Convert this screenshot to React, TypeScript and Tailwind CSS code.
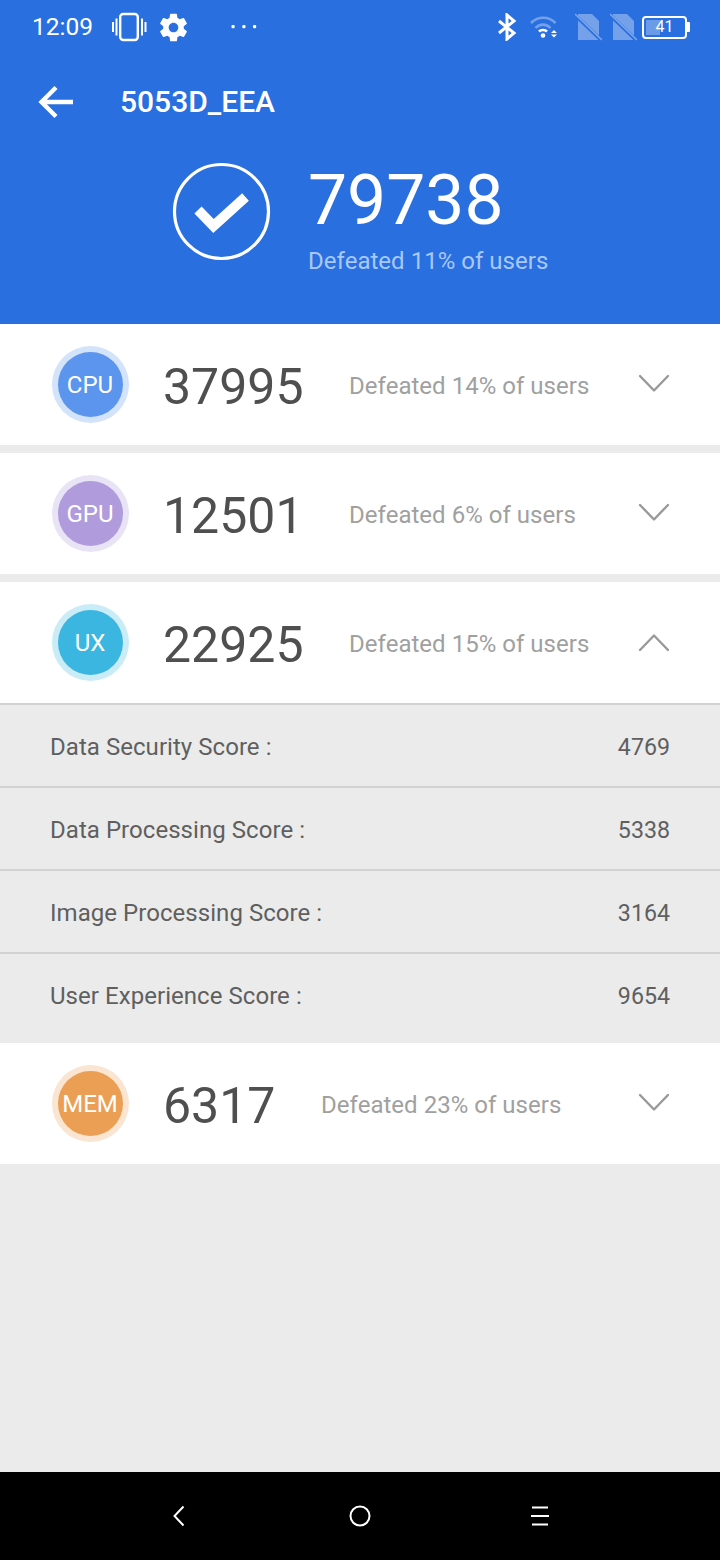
import React from "react";

function Chevron({ up }: { up?: boolean }) {
  return (
    <svg width="32" height="20" viewBox="0 0 32 20" fill="none" className="shrink-0">
      <path d={up ? "M2 18 L16 3.5 L30 18" : "M2 2 L16 16.5 L30 2"} stroke="#999999" strokeWidth="2.4" strokeLinecap="round" strokeLinejoin="round" />
    </svg>
  );
}

type RowProps = {
  label: string;
  score: string;
  text: string;
  inner: string;
  outer: string;
  up?: boolean;
  scoreWidth: string;
};

function ScoreRow({ label, score, text, inner, outer, up, scoreWidth }: RowProps) {
  return (
    <div className="h-[121px] bg-white flex items-center pl-[51.5px] pr-[50px]">
      <div className={`w-[77px] h-[77px] rounded-full flex items-center justify-center shrink-0 ${outer}`}>
        <div className={`w-[65px] h-[65px] rounded-full flex items-center justify-center text-white text-[24px] pt-[1px] ${inner}`}>{label}</div>
      </div>
      <div className={`ml-[34.5px] mt-[4px] text-[50px] leading-none text-[#4f4f4f] ${scoreWidth}`}>{score}</div>
      <div className="mt-[2px] text-[24px] leading-none text-[#a0a0a0] tracking-[0.03px]">{text}</div>
      <div className="ml-auto -mt-[1px]"><Chevron up={up} /></div>
    </div>
  );
}

function DetailRow({ label, value, last }: { label: string; value: string; last?: boolean }) {
  return (
    <div className={`flex items-center justify-between px-[50px] text-[24px] leading-none text-[#5f5f5f] bg-[#ebebeb] ${last ? "h-[89px] pb-[5px]" : "h-[83px] pt-[2px] border-b-2 border-[#d2d2d2]"}`}>
      <span className="tracking-[0.05px]">{label}</span>
      <span className="text-[23.2px] pt-[2px]">{value}</span>
    </div>
  );
}

function SimIcon({ className }: { className?: string }) {
  return (
    <svg width="27" height="28" viewBox="0 0 27 28" fill="none" className={className}>
      <path d="M3 1 H17 L24 8 V27 H3 Z" fill="white" fillOpacity="0.35" />
      <path d="M0 2 L27 28" stroke="#2a6fdf" strokeWidth="3.5" />
      <path d="M0 1 L27 27" stroke="white" strokeOpacity="0.4" strokeWidth="1.6" />
    </svg>
  );
}

export default function App() {
  return (
    <div className="w-[720px] h-[1560px] flex flex-col bg-[#ebebeb] overflow-hidden" style={{ fontFamily: "Roboto, sans-serif" }}>
      <header className="h-[324px] bg-[#2a6fdf] text-white shrink-0">
        {/* Status bar */}
        <div className="h-[54px] flex items-center pl-[32px] pr-[30px]">
          <span className="text-[24.5px] leading-none">12:09</span>
          <svg width="35" height="30" viewBox="0 0 35 30" fill="none" stroke="white" className="ml-[19px]">
            <rect x="8.2" y="2" width="17.6" height="26" rx="3" strokeWidth="2.4" />
            <path d="M4.5 6.5v17M1 10v10M30 6.5v17M33.5 10v10" strokeWidth="2" />
          </svg>
          <svg width="33" height="33" viewBox="0 0 24 24" fill="white" className="ml-[10px]">
            <path fillRule="evenodd" d="M19.43 12.98c.04-.32.07-.64.07-.98s-.03-.66-.07-.98l2.11-1.65c.19-.15.24-.42.12-.64l-2-3.46c-.12-.22-.39-.3-.61-.22l-2.49 1c-.52-.4-1.08-.73-1.69-.98l-.38-2.65C14.46 2.18 14.25 2 14 2h-4c-.25 0-.46.18-.49.42l-.38 2.65c-.61.25-1.17.59-1.69.98l-2.49-1c-.23-.09-.49 0-.61.22l-2 3.46c-.13.22-.07.49.12.64l2.11 1.65c-.04.32-.07.65-.07.98s.03.66.07.98l-2.11 1.65c-.19.15-.24.42-.12.64l2 3.46c.12.22.39.3.61.22l2.49-1c.52.4 1.08.73 1.69.98l.38 2.65c.03.24.24.42.49.42h4c.25 0 .46-.18.49-.42l.38-2.65c.61-.25 1.17-.59 1.69-.98l2.49 1c.23.09.49 0 .61-.22l2-3.46c.12-.22.07-.49-.12-.64l-2.11-1.65zM12 15.5c-1.93 0-3.5-1.57-3.5-3.5s1.57-3.5 3.5-3.5 3.5 1.57 3.5 3.5-1.57 3.5-3.5 3.5z" />
          </svg>
          <svg width="26" height="6" viewBox="0 0 26 6" fill="white" className="ml-[41px]">
            <rect x="0.5" y="1" width="3.2" height="3.2" rx="1" />
            <rect x="11.3" y="1" width="3.2" height="3.2" rx="1" />
            <rect x="22" y="1" width="3.2" height="3.2" rx="1" />
          </svg>
          <div className="ml-auto flex items-center">
            <svg width="20" height="28" viewBox="0 0 20 28" fill="none" stroke="white" strokeWidth="3">
              <path d="M2 8 L17 20 L10 26 V2 L17 8 L2 20" strokeLinejoin="miter" />
            </svg>
            <svg width="30" height="26" viewBox="0 0 30 26" fill="none" className="ml-[13px]">
              <path d="M1 9 C7.5 2 19 2 25.5 9" stroke="white" strokeOpacity="0.35" strokeWidth="2.6" />
              <path d="M5.5 14 C9.5 9.5 16.5 9.5 20.5 14" stroke="white" strokeOpacity="0.35" strokeWidth="2.6" />
              <path d="M9 17.5 C11 15.5 15 15.5 17 17.5" stroke="white" strokeWidth="2.6" />
              <circle cx="13" cy="21.5" r="2.3" fill="white" />
              <path d="M21 19 L24 16 L27 19 Z M21 20.5 L24 23.5 L27 20.5 Z" fill="white" />
            </svg>
            <SimIcon className="ml-[15px]" />
            <SimIcon className="ml-[8px]" />
            <div className="ml-[5px] flex items-center">
              <div className="relative w-[45px] h-[23px] rounded-[4px] border-2 border-white flex items-center justify-center text-[16px] leading-none">
                <div className="absolute left-[2px] top-[2px] bottom-[2px] w-[14px] bg-white/30" />
                <span className="relative">41</span>
              </div>
              <div className="w-[3px] h-[10px] bg-white rounded-r-[1px]" />
            </div>
          </div>
        </div>

        {/* App bar */}
        <div className="h-[96px] flex items-center pl-[38px]">
          <svg width="36" height="34" viewBox="0 0 36 34" fill="none" stroke="white" strokeWidth="4.4">
            <path d="M35 17 H4 M18 2.5 L3.5 17 L18 31.5" />
          </svg>
          <span className="ml-[46px] text-[30px] leading-none font-medium">5053D_EEA</span>
        </div>

        {/* Total */}
        <div className="flex items-start pl-[172px] pt-[12px]">
          <svg width="100" height="100" viewBox="0 0 100 100" fill="none" stroke="white">
            <circle cx="49.5" cy="49.5" r="47" strokeWidth="3.2" />
            <path d="M26 48 L41.5 64 L73.5 35" strokeWidth="10" />
          </svg>
          <div className="ml-[36px]">
            <div className="text-[69.6px] leading-[76px]">79738</div>
            <div className="text-[24px] leading-none mt-[11px] text-[#a8c9f7] tracking-[0.03px]">Defeated 11% of users</div>
          </div>
        </div>
      </header>

      <ScoreRow label="CPU" score="37995" text="Defeated 14% of users" inner="bg-[#5b95ee]" outer="bg-[#d3e3fa]" scoreWidth="w-[186px]" />
      <div className="h-[8px] bg-[#ebebeb]" />
      <ScoreRow label="GPU" score="12501" text="Defeated 6% of users" inner="bg-[#b09cdc]" outer="bg-[#e9e3f6]" scoreWidth="w-[186px]" />
      <div className="h-[8px] bg-[#ebebeb]" />
      <ScoreRow label="UX" score="22925" text="Defeated 15% of users" inner="bg-[#3bb6e0]" outer="bg-[#caecf7]" scoreWidth="w-[186px]" up />
      <div className="border-t-2 border-[#d2d2d2]">
        <DetailRow label="Data Security Score :" value="4769" />
        <DetailRow label="Data Processing Score :" value="5338" />
        <DetailRow label="Image Processing Score :" value="3164" />
        <DetailRow label="User Experience Score :" value="9654" last />
      </div>
      <ScoreRow label="MEM" score="6317" text="Defeated 23% of users" inner="bg-[#eb9f54]" outer="bg-[#fae5d2]" scoreWidth="w-[158px]" />

      <div className="flex-1" />

      <nav className="h-[88px] bg-black flex items-center shrink-0">
        <div className="flex w-full items-center justify-between pl-[173px] pr-[170px] -mt-[1px]">
          <svg width="14" height="22" viewBox="0 0 14 22" fill="none" stroke="white" strokeWidth="2">
            <path d="M10.5 1.5 L1.5 11 L10.5 20.5" />
          </svg>
          <svg width="22" height="22" viewBox="0 0 22 22" fill="none" stroke="white" strokeWidth="2" className="ml-[3px]">
            <circle cx="11" cy="11" r="9.5" />
          </svg>
          <svg width="20" height="20" viewBox="0 0 20 20" fill="none" stroke="white" strokeWidth="2">
            <path d="M2 1.5 H18 M1 10 H19 M2 18.5 H18" />
          </svg>
        </div>
      </nav>
    </div>
  );
}
